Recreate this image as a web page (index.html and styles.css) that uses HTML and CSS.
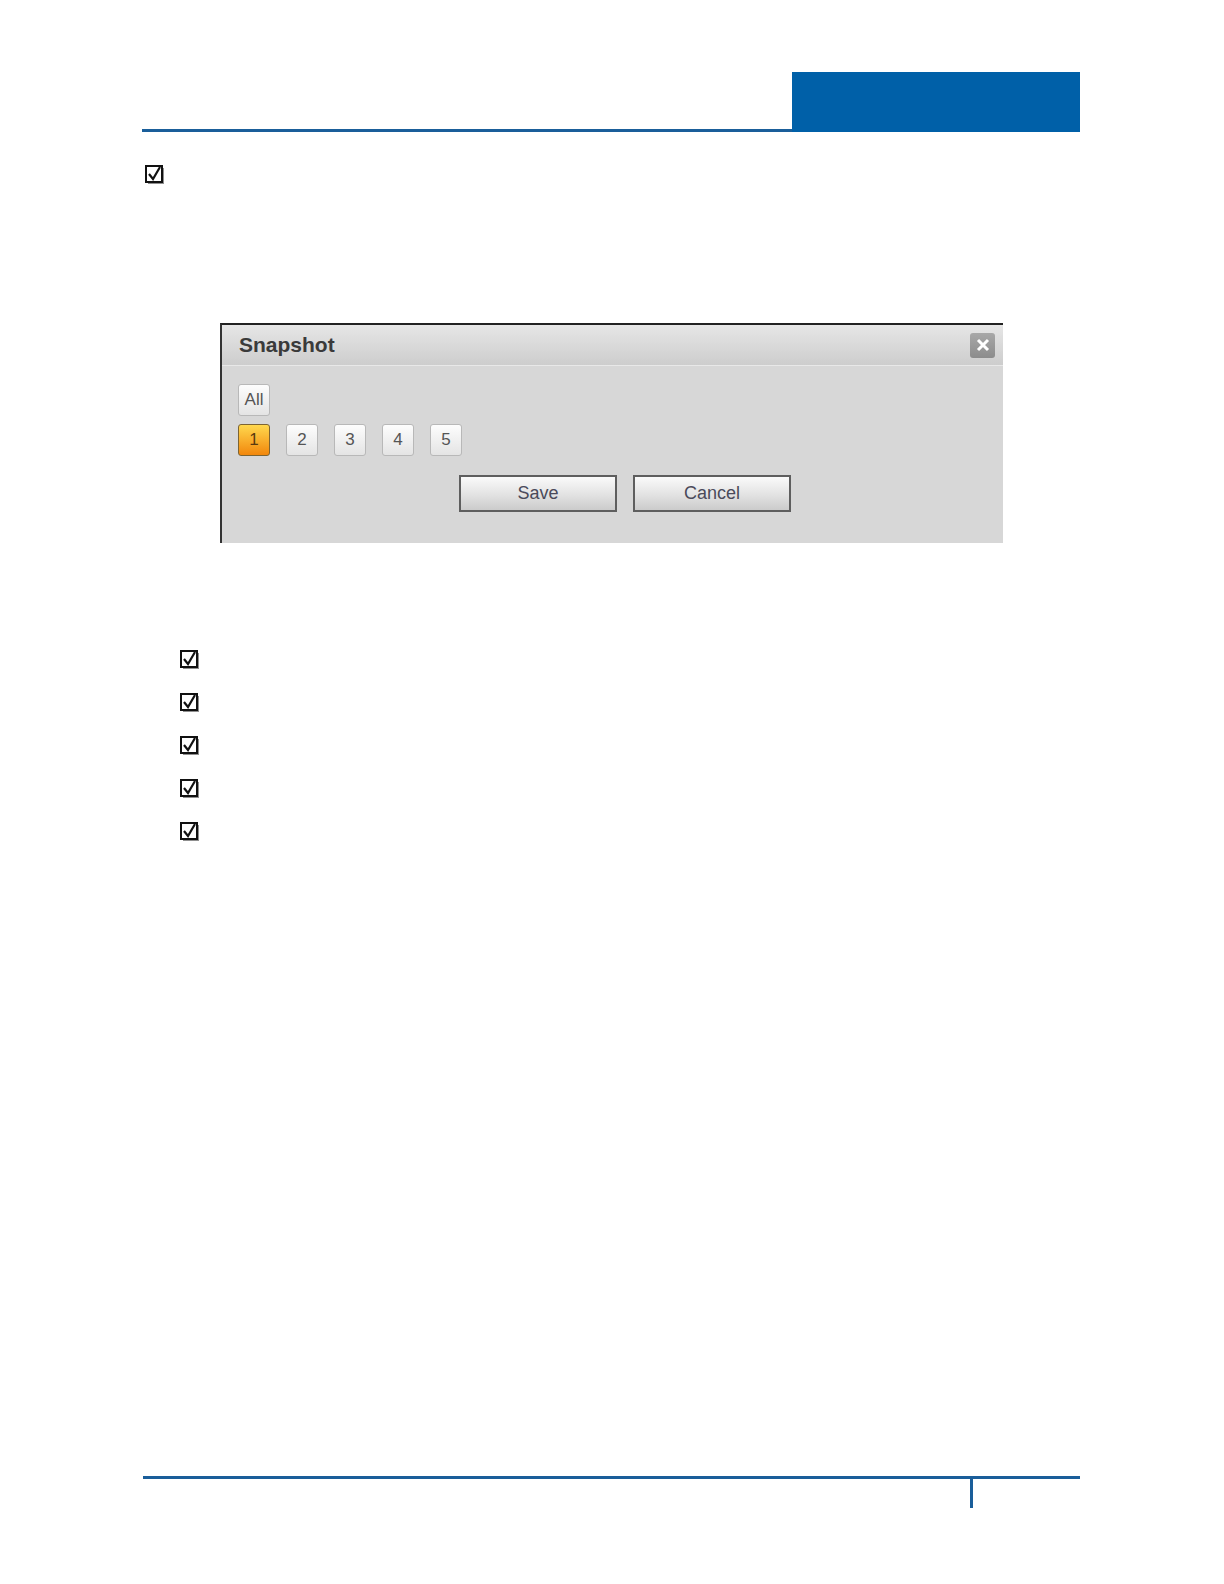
FILE: index.html
```html
<!DOCTYPE html>
<html lang="en">

<head>
    <meta charset="UTF-8">
    <title>Snapshot</title>
    <link rel="stylesheet" href="styles.css">
</head>

<body>
    <div class="page">
        <!--页眉-->
        <div class="header">
            <div class="header-line"></div>
            <div class="header-box"></div>
        </div>

        <div class="top-check">
            <svg class="chk" width="20" height="20" viewBox="0 0 20 20">
                <rect x="3" y="3" width="16" height="16" fill="#444" opacity="0.6" />
                <rect x="1" y="1" width="16" height="16" fill="#fff" stroke="#111" stroke-width="2" />
                <path d="M4 9 L8 14 L15 2" fill="none" stroke="#111" stroke-width="2.2" />
            </svg>
        </div>

        <!--截图对话框-->
        <div class="dialog">
            <div class="dialog-title">
                <span class="title-text">Snapshot</span>
                <span class="close-btn">
                    <svg width="14" height="14" viewBox="0 0 14 14">
                        <path d="M2 2 L12 12 M12 2 L2 12" stroke="#fff" stroke-width="3" />
                    </svg>
                </span>
            </div>
            <div class="dialog-body">
                <div class="row">
                    <span class="ch-btn">All</span>
                </div>
                <div class="row ch-row">
                    <span class="ch-btn active">1</span>
                    <span class="ch-btn">2</span>
                    <span class="ch-btn">3</span>
                    <span class="ch-btn">4</span>
                    <span class="ch-btn">5</span>
                </div>
                <div class="actions">
                    <span class="big-btn">Save</span>
                    <span class="big-btn">Cancel</span>
                </div>
            </div>
        </div>

        <ul class="check-list">
            <li><svg class="chk" width="20" height="20" viewBox="0 0 20 20"><rect x="3" y="3" width="16" height="16" fill="#444" opacity="0.6" /><rect x="1" y="1" width="16" height="16" fill="#fff" stroke="#111" stroke-width="2" /><path d="M4 9 L8 14 L15 2" fill="none" stroke="#111" stroke-width="2.2" /></svg></li>
            <li><svg class="chk" width="20" height="20" viewBox="0 0 20 20"><rect x="3" y="3" width="16" height="16" fill="#444" opacity="0.6" /><rect x="1" y="1" width="16" height="16" fill="#fff" stroke="#111" stroke-width="2" /><path d="M4 9 L8 14 L15 2" fill="none" stroke="#111" stroke-width="2.2" /></svg></li>
            <li><svg class="chk" width="20" height="20" viewBox="0 0 20 20"><rect x="3" y="3" width="16" height="16" fill="#444" opacity="0.6" /><rect x="1" y="1" width="16" height="16" fill="#fff" stroke="#111" stroke-width="2" /><path d="M4 9 L8 14 L15 2" fill="none" stroke="#111" stroke-width="2.2" /></svg></li>
            <li><svg class="chk" width="20" height="20" viewBox="0 0 20 20"><rect x="3" y="3" width="16" height="16" fill="#444" opacity="0.6" /><rect x="1" y="1" width="16" height="16" fill="#fff" stroke="#111" stroke-width="2" /><path d="M4 9 L8 14 L15 2" fill="none" stroke="#111" stroke-width="2.2" /></svg></li>
            <li><svg class="chk" width="20" height="20" viewBox="0 0 20 20"><rect x="3" y="3" width="16" height="16" fill="#444" opacity="0.6" /><rect x="1" y="1" width="16" height="16" fill="#fff" stroke="#111" stroke-width="2" /><path d="M4 9 L8 14 L15 2" fill="none" stroke="#111" stroke-width="2.2" /></svg></li>
        </ul>

        <!--页脚-->
        <div class="footer">
            <div class="footer-tick"></div>
        </div>
    </div>
</body>

</html>
```

FILE: styles.css
```css
* {
    margin: 0;
    padding: 0;
}

body {
    background-color: #fff;
    font-family: "Liberation Sans", Arial, sans-serif;
}

.page {
    min-height: 1584px;
    display: flex;
    flex-direction: column;
    padding-bottom: 76px;
    box-sizing: border-box;
}

/*页眉*/
.header {
    display: flex;
    align-items: flex-end;
    margin: 72px 0 0 142px;
    width: 938px;
    height: 60px;
}

.header-line {
    flex: 1;
    height: 3px;
    background-color: #1a5e9a;
}

.header-box {
    width: 288px;
    height: 60px;
    background-color: #0060a8;
}

.chk {
    display: block;
}

.top-check {
    margin: 33px 0 0 145px;
}

/*对话框*/
.dialog {
    margin: 138px 0 0 220px;
    width: 781px;
    background-color: #d7d7d7;
    border-top: 2px solid #222;
    border-left: 2px solid #333;
}

.dialog-title {
    display: flex;
    align-items: center;
    justify-content: space-between;
    height: 40px;
    padding: 0 8px 0 17px;
    background: linear-gradient(#e6e6e6, #cdcdcd);
    border-bottom: 1px solid #e8e8e8;
}

.title-text {
    font-size: 21px;
    font-weight: bold;
    color: #3a3a3a;
}

.close-btn {
    display: flex;
    align-items: center;
    justify-content: center;
    width: 25px;
    height: 25px;
    border-radius: 3px;
    background: linear-gradient(#a8a8a8, #8c8c8c);
}

.dialog-body {
    padding: 18px 0 31px 16px;
}

.row {
    display: flex;
    gap: 16px;
}

.ch-row {
    margin-top: 8px;
}

.ch-btn {
    display: flex;
    align-items: center;
    justify-content: center;
    width: 30px;
    height: 30px;
    border: 1px solid #b8b8b8;
    border-radius: 3px;
    background: linear-gradient(#fdfdfd, #e4e4e4);
    font-size: 17px;
    color: #555;
}

.ch-btn.active {
    border-color: #7d6432;
    background: linear-gradient(#ffd84e, #f2870c);
    color: #5a3a10;
}

.actions {
    display: flex;
    gap: 16px;
    margin: 19px 0 0 221px;
}

.big-btn {
    display: flex;
    align-items: center;
    justify-content: center;
    width: 154px;
    height: 33px;
    border: 2px solid #5e5e5e;
    background: linear-gradient(#fafafa, #e2e2e2 55%, #cbcbcb);
    font-size: 18px;
    color: #4a4a5a;
}

/*列表*/
.check-list {
    list-style: none;
    margin: 107px 0 0 180px;
    display: flex;
    flex-direction: column;
    gap: 23px;
}

/*页脚*/
.footer {
    margin: auto 0 0 143px;
    width: 937px;
    height: 29px;
    border-top: 3px solid #1a5e9a;
}

.footer-tick {
    margin-left: 827px;
    width: 3px;
    height: 29px;
    background-color: #1a5e9a;
}
```
